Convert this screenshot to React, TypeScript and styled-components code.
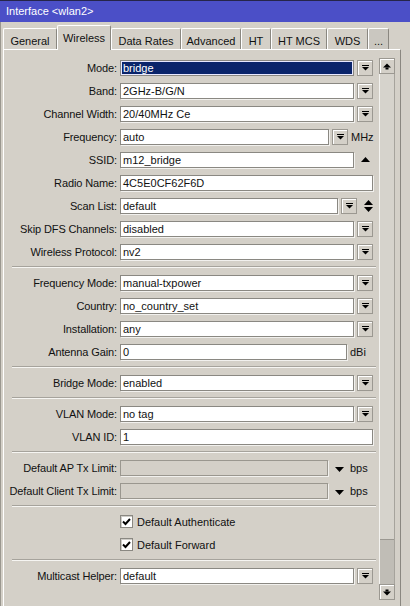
import React from 'react';
import styled, { createGlobalStyle, css } from 'styled-components';

const Global = createGlobalStyle`
  html, body { margin: 0; padding: 0; background: #d4d0c8; }
  body { font-family: "Liberation Sans", Arial, sans-serif; font-size: 11px; color: #000; }
`;

const Window = styled.div`
  width: 410px;
  height: 606px;
  display: flex;
  flex-direction: column;
  overflow: hidden;
  background: #d4d0c8;
`;

const TitleBar = styled.div`
  height: 22px;
  box-sizing: border-box;
  border-top: 1px solid #25254a;
  background: #4b4fc7;
  color: #fff;
  padding-left: 6px;
  line-height: 20px;
  font-size: 11px;
`;

const Body = styled.div`
  flex: 1;
  display: flex;
  flex-direction: column;
  min-height: 0;
  border-left: 1px solid #9a978f;
`;

const TabStrip = styled.div`
  height: 27px;
  display: flex;
  align-items: flex-end;
  padding-left: 2px;
  position: relative;
  z-index: 1;
`;

const Tab = styled.div<{ $w: number; $active?: boolean; $dim?: boolean }>`
  width: ${(p) => p.$w}px;
  box-sizing: border-box;
  height: 21px;
  padding-top: 6px;
  line-height: 12px;
  text-align: center;
  background: ${(p) => (p.$dim ? '#cac7c0' : '#d4d0c8')};
  border-top: 1px solid #fff;
  border-left: 1px solid #fff;
  border-right: 1px solid #8a8780;
  border-radius: 2px 2px 0 0;
  color: #111;
  white-space: nowrap;
  ${(p) =>
    p.$active &&
    css`
      height: 25px;
      margin-bottom: -1px;
      padding-top: 6px;
      position: relative;
      z-index: 2;
    `}
`;

const Panel = styled.div`
  flex: 1;
  width: 398px;
  box-sizing: border-box;
  margin-left: 2px;
  display: flex;
  border-top: 1px solid #fff;
  border-left: 1px solid #fff;
  border-right: 1px solid #8a8780;
  min-height: 0;
`;

const Form = styled.div`
  width: 375px;
  padding-top: 6px;
  display: flex;
  flex-direction: column;
`;

const Row = styled.div`
  height: 23px;
  display: flex;
  align-items: center;
`;

const Label = styled.div`
  width: 113px;
  margin-right: 3px;
  text-align: right;
  white-space: nowrap;
  letter-spacing: -0.12px;
  color: #111;
`;

const Field = styled.div`
  display: flex;
  align-items: center;
  gap: 3px;
`;

const TextBox = styled.div<{ $w: number; $selected?: boolean; $disabled?: boolean }>`
  width: ${(p) => p.$w}px;
  height: 16px;
  box-sizing: border-box;
  border: 1px solid #8a8882;
  box-shadow: 1px 1px 0 #f2f1ee;
  background: #fff;
  padding-left: 2px;
  line-height: 14px;
  white-space: nowrap;
  overflow: hidden;
  color: #111;
  ${(p) =>
    p.$selected &&
    css`
      background: #0a246a;
      color: #fff;
      box-shadow: inset 0 0 0 1px #e8e8ff;
    `}
  ${(p) =>
    p.$disabled &&
    css`
      background: #d4d0c8;
      border-color: #9a978f;
    `}
`;

const DropButton = styled.div`
  width: 16px;
  height: 16px;
  box-sizing: border-box;
  border: 1px solid #9b9891;
  box-shadow: inset 1px 1px 0 #fff;
  background: #d4d0c8;
  display: flex;
  align-items: center;
  justify-content: center;
`;

const GlyphBox = styled.div`
  width: 16px;
  display: flex;
  flex-direction: column;
  align-items: center;
  gap: 2px;
`;

const Unit = styled.span<{ $ml?: number }>`
  margin-left: ${(p) => p.$ml ?? 0}px;
  color: #111;
`;

const Separator = styled.div`
  height: 8px;
  display: flex;
  align-items: center;
  &::after {
    content: '';
    margin-left: 8px;
    width: 364px;
    border-top: 1px solid #a6a39c;
    border-bottom: 1px solid #f6f5f2;
  }
`;

const CheckRow = styled.div`
  height: 23px;
  display: flex;
  align-items: center;
  padding-left: 116px;
  gap: 4px;
  color: #111;
`;

const CheckBox = styled.div`
  width: 13px;
  height: 13px;
  box-sizing: border-box;
  border: 1px solid #8a8882;
  box-shadow: inset 1px 1px 0 #cfcdc8;
  background: #fff;
  display: flex;
  align-items: center;
  justify-content: center;
`;

const ScrollBar = styled.div`
  width: 16px;
  margin: 8px 5px 6px 0;
  display: flex;
  flex-direction: column;
`;

const ScrollBtn = styled.div`
  width: 16px;
  height: 16px;
  box-sizing: border-box;
  border: 1px solid #9b9891;
  box-shadow: inset 1px 1px 0 #fff;
  background: #d4d0c8;
  display: flex;
  align-items: center;
  justify-content: center;
`;

const Track = styled.div`
  flex: 1;
  display: flex;
  flex-direction: column;
  justify-content: flex-end;
  border-left: 1px solid #f4f3f0;
  border-right: 1px solid #a6a39c;
  background: #d6d3cc;
`;

const Thumb = styled.div`
  height: 44px;
  background: #c0bdb6;
  border-top: 1px solid #9b9891;
`;

const DropGlyph = () => (
  <svg width="7" height="6" viewBox="0 0 7 6">
    <rect x="0" y="0" width="7" height="1" fill="#000" />
    <polygon points="0,2 7,2 3.5,5.6" fill="#000" />
  </svg>
);

const Tri = ({ up }: { up?: boolean }) => (
  <svg width="9" height="5" viewBox="0 0 9 5">
    <polygon points={up ? '0,5 9,5 4.5,0' : '0,0 9,0 4.5,5'} fill="#000" />
  </svg>
);

const ScrollArrow = ({ up }: { up?: boolean }) => (
  <svg width="8" height="7" viewBox="0 0 8 7">
    {up ? (
      <>
        <polygon points="0,4.5 8,4.5 4,0.5" fill="#000" />
        <rect x="2.5" y="4.5" width="3" height="2" fill="#000" />
      </>
    ) : (
      <>
        <rect x="2.5" y="0.5" width="3" height="2" fill="#000" />
        <polygon points="0,2.5 8,2.5 4,6.5" fill="#000" />
      </>
    )}
  </svg>
);

const Check = () => (
  <svg width="9" height="9" viewBox="0 0 9 9">
    <path d="M1 4.5 L3.5 7 L8 2" stroke="#000" strokeWidth="2" fill="none" />
  </svg>
);

const SelectRow = ({ label, value, selected }: { label: string; value: string; selected?: boolean }) => (
  <Row>
    <Label>{label}</Label>
    <Field>
      <TextBox $w={234} $selected={selected}>{value}</TextBox>
      <DropButton>
        <DropGlyph />
      </DropButton>
    </Field>
  </Row>
);

const TextRow = ({ label, value }: { label: string; value: string }) => (
  <Row>
    <Label>{label}</Label>
    <Field>
      <TextBox $w={253}>{value}</TextBox>
    </Field>
  </Row>
);

const LimitRow = ({ label }: { label: string }) => (
  <Row>
    <Label>{label}</Label>
    <Field>
      <TextBox $w={208} $disabled />
      <Unit $ml={4}>
        <Tri />
      </Unit>
      <Unit $ml={3}>bps</Unit>
    </Field>
  </Row>
);

const tabs: { name: string; w: number; active?: boolean; dim?: boolean }[] = [
  { name: 'General', w: 54 },
  { name: 'Wireless', w: 54, active: true },
  { name: 'Data Rates', w: 70 },
  { name: 'Advanced', w: 60 },
  { name: 'HT', w: 30 },
  { name: 'HT MCS', w: 56 },
  { name: 'WDS', w: 41 },
  { name: '...', w: 21, dim: true },
];

export default function App() {
  return (
    <>
      <Global />
      <Window>
        <TitleBar>Interface &lt;wlan2&gt;</TitleBar>
        <Body>
          <TabStrip>
            {tabs.map((t) => (
              <Tab key={t.name} $w={t.w} $active={t.active} $dim={t.dim}>
                {t.name}
              </Tab>
            ))}
          </TabStrip>
          <Panel>
            <Form>
              <SelectRow label="Mode:" value="bridge" selected />
              <SelectRow label="Band:" value="2GHz-B/G/N" />
              <SelectRow label="Channel Width:" value="20/40MHz Ce" />
              <Row>
                <Label>Frequency:</Label>
                <Field>
                  <TextBox $w={209}>auto</TextBox>
                  <DropButton>
                    <DropGlyph />
                  </DropButton>
                  <Unit>MHz</Unit>
                </Field>
              </Row>
              <Row>
                <Label>SSID:</Label>
                <Field>
                  <TextBox $w={234}>m12_bridge</TextBox>
                  <GlyphBox>
                    <Tri up />
                  </GlyphBox>
                </Field>
              </Row>
              <TextRow label="Radio Name:" value="4C5E0CF62F6D" />
              <Row>
                <Label>Scan List:</Label>
                <Field>
                  <TextBox $w={218}>default</TextBox>
                  <DropButton>
                    <DropGlyph />
                  </DropButton>
                  <GlyphBox>
                    <Tri up />
                    <Tri />
                  </GlyphBox>
                </Field>
              </Row>
              <SelectRow label="Skip DFS Channels:" value="disabled" />
              <SelectRow label="Wireless Protocol:" value="nv2" />
              <Separator />
              <SelectRow label="Frequency Mode:" value="manual-txpower" />
              <SelectRow label="Country:" value="no_country_set" />
              <SelectRow label="Installation:" value="any" />
              <Row>
                <Label>Antenna Gain:</Label>
                <Field>
                  <TextBox $w={227}>0</TextBox>
                  <Unit>dBi</Unit>
                </Field>
              </Row>
              <Separator />
              <SelectRow label="Bridge Mode:" value="enabled" />
              <Separator />
              <SelectRow label="VLAN Mode:" value="no tag" />
              <TextRow label="VLAN ID:" value="1" />
              <Separator />
              <LimitRow label="Default AP Tx Limit:" />
              <LimitRow label="Default Client Tx Limit:" />
              <Separator />
              <CheckRow>
                <CheckBox>
                  <Check />
                </CheckBox>
                Default Authenticate
              </CheckRow>
              <CheckRow>
                <CheckBox>
                  <Check />
                </CheckBox>
                Default Forward
              </CheckRow>
              <Separator />
              <SelectRow label="Multicast Helper:" value="default" />
            </Form>
            <ScrollBar>
              <ScrollBtn>
                <ScrollArrow up />
              </ScrollBtn>
              <Track>
                <Thumb />
              </Track>
              <ScrollBtn>
                <ScrollArrow />
              </ScrollBtn>
            </ScrollBar>
          </Panel>
        </Body>
      </Window>
    </>
  );
}
